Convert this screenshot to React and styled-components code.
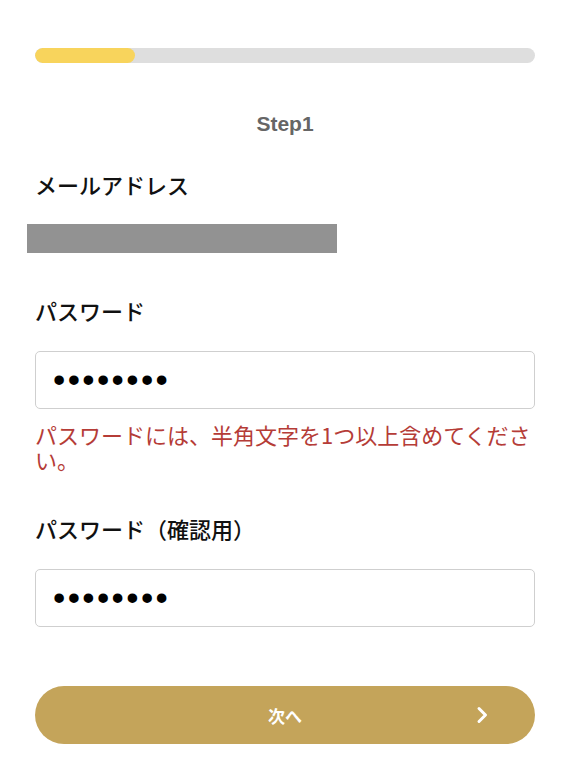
import React from "react";
import styled, { createGlobalStyle } from "styled-components";

const Global = createGlobalStyle`
  html, body {
    margin: 0;
    padding: 0;
    background: #fff;
  }
  body {
    font-family: "Noto Sans CJK JP", "Noto Sans", sans-serif;
    color: #111;
  }
`;

const Page = styled.div`
  width: 570px;
  padding: 48px 35px 0;
  box-sizing: border-box;
  display: flex;
  flex-direction: column;
`;

const Track = styled.div`
  height: 15px;
  border-radius: 8px;
  background: #dedede;
  overflow: hidden;
`;

const Fill = styled.div`
  height: 100%;
  border-radius: 8px;
  background: #f8d45c;
`;

const StepTitle = styled.div`
  margin-top: 47px;
  text-align: center;
  font-family: "Liberation Sans", Arial, sans-serif;
  font-weight: 700;
  font-size: 21px;
  line-height: 28px;
  color: #666;
`;

const Label = styled.div`
  margin-top: ${(p) => p.$top}px;
  font-size: 22px;
  line-height: 30px;
  font-weight: 500;
  color: #111;
`;

const Redacted = styled.div`
  margin-top: 25px;
  margin-left: -8px;
  width: 310px;
  height: 29px;
  background: #929292;
`;

const Field = styled.input`
  margin-top: 26px;
  height: 58px;
  box-sizing: border-box;
  border: 1.5px solid #cfcfcf;
  border-radius: 5px;
  padding: 0 17px;
  font-family: "Liberation Sans", Arial, sans-serif;
  font-size: 35px;
  letter-spacing: 2.4px;
  color: #000;
  outline: none;
  background: #fff;
`;

const ErrorText = styled.div`
  margin-top: 13px;
  font-size: 22px;
  line-height: 25px;
  color: #b53c37;
`;

const NextButton = styled.button`
  margin-top: 59px;
  height: 58px;
  border: none;
  border-radius: 29px;
  background: #c4a45a;
  color: #fff;
  font-family: "Noto Sans CJK JP", sans-serif;
  font-weight: 700;
  font-size: 17px;
  display: grid;
  grid-template-columns: 1fr auto 1fr;
  align-items: center;
  padding: 0 46px;
`;

const ButtonText = styled.span`
  grid-column: 2;
`;

const Chevron = styled.svg`
  grid-column: 3;
  justify-self: end;
  width: 14px;
  height: 18px;
`;

export default function App() {
  return (
    <>
      <Global />
      <Page>
        <Track>
          <Fill style={{ width: "20%" }} />
        </Track>
        <StepTitle>Step1</StepTitle>
        <Label $top={31}>メールアドレス</Label>
        <Redacted />
        <Label $top={42}>パスワード</Label>
        <Field type="password" value="password" readOnly />
        <ErrorText>
          パスワードには、半角文字を1つ以上含めてください。
        </ErrorText>
        <Label $top={41}>パスワード（確認用）</Label>
        <Field type="password" value="password" readOnly />
        <NextButton type="button">
          <ButtonText>次へ</ButtonText>
          <Chevron viewBox="0 0 14 18">
            <path
              d="M4 2.5 L10.5 9 L4 15.5"
              fill="none"
              stroke="#fff"
              strokeWidth="3"
              strokeLinecap="round"
              strokeLinejoin="round"
            />
          </Chevron>
        </NextButton>
      </Page>
    </>
  );
}
